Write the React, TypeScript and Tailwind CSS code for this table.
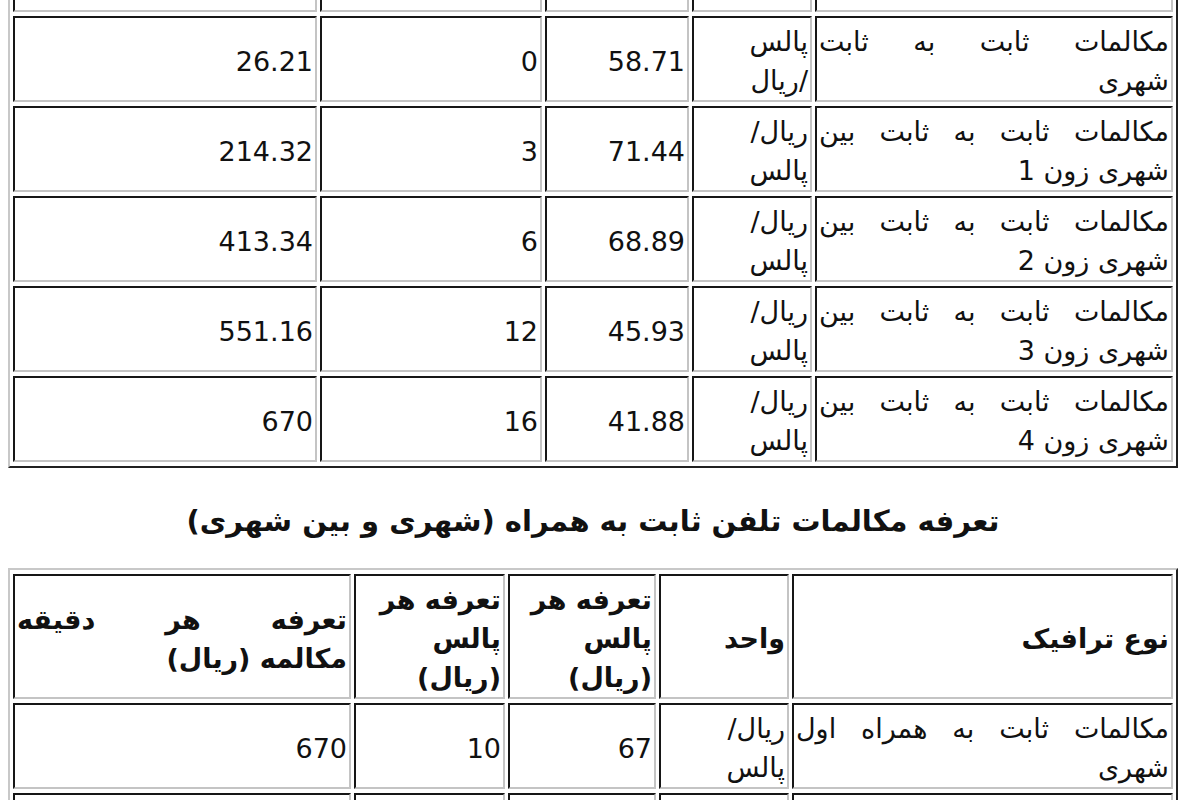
import React from "react";

const cell =
  "border-2 border-t-[#161616] border-l-[#161616] border-r-[#c4c4c4] border-b-[#c4c4c4] px-[2px] pt-[4px] pb-0 align-middle";
const tableCls =
  "w-full table-fixed border-separate [border-spacing:3px_4px] border-2 border-t-[#c8c8c8] border-l-[#c8c8c8] border-r-[#202020] border-b-[#202020]";

function TwoLine({ first, second, justify }: { first: string; second: string; justify?: boolean }) {
  return (
    <>
      <span className={justify ? "block [text-align-last:justify]" : "block"}>{first}</span>
      <span className="block">{second}</span>
    </>
  );
}

type FixedRow = { zone: string; unitFirst: string; unitSecond: string; pulse: string; count: string; total: string };

const fixedRows: FixedRow[] = [
  { zone: "", unitFirst: "پالس", unitSecond: "/ریال", pulse: "58.71", count: "0", total: "26.21" },
  { zone: "1", unitFirst: "ریال/", unitSecond: "پالس", pulse: "71.44", count: "3", total: "214.32" },
  { zone: "2", unitFirst: "ریال/", unitSecond: "پالس", pulse: "68.89", count: "6", total: "413.34" },
  { zone: "3", unitFirst: "ریال/", unitSecond: "پالس", pulse: "45.93", count: "12", total: "551.16" },
  { zone: "4", unitFirst: "ریال/", unitSecond: "پالس", pulse: "41.88", count: "16", total: "670" },
];

function FixedTable() {
  return (
    <table className={`${tableCls} mt-[-80px]`}>
      <tbody>
        <tr className="h-[86px]">
          <td className={`${cell} w-[358px]`}></td>
          <td className={`${cell} w-[120px]`}></td>
          <td className={`${cell} w-[144px]`}></td>
          <td className={`${cell} w-[222px]`}></td>
          <td className={cell}></td>
        </tr>
        {fixedRows.map((row) => (
          <tr key={row.total}>
            <td className={cell}>
              {row.zone ? (
                <TwoLine first="مکالمات ثابت به ثابت بین" second={`شهری زون ${row.zone}`} justify />
              ) : (
                <TwoLine first="مکالمات ثابت به ثابت" second="شهری" justify />
              )}
            </td>
            <td className={cell}>
              <TwoLine first={row.unitFirst} second={row.unitSecond} />
            </td>
            <td className={cell}>{row.pulse}</td>
            <td className={cell}>{row.count}</td>
            <td className={cell}>{row.total}</td>
          </tr>
        ))}
      </tbody>
    </table>
  );
}

function MobileTable() {
  return (
    <table className={tableCls}>
      <tbody>
        <tr className="font-bold">
          <td className={`${cell} w-[381px]`}>نوع ترافیک</td>
          <td className={`${cell} w-[130px]`}>واحد</td>
          <td className={`${cell} w-[148px]`}>
            <span className="block">تعرفه هر</span>
            <span className="block">پالس</span>
            <span className="block">(ریال)</span>
          </td>
          <td className={`${cell} w-[151px]`}>
            <span className="block">تعرفه هر</span>
            <span className="block">پالس</span>
            <span className="block">(ریال)</span>
          </td>
          <td className={cell}>
            <TwoLine first="تعرفه هر دقیقه" second="مکالمه (ریال)" justify />
          </td>
        </tr>
        <tr>
          <td className={cell}>
            <TwoLine first="مکالمات ثابت به همراه اول" second="شهری" justify />
          </td>
          <td className={cell}>
            <TwoLine first="ریال/" second="پالس" />
          </td>
          <td className={cell}>67</td>
          <td className={cell}>10</td>
          <td className={cell}>670</td>
        </tr>
        <tr className="h-[86px]">
          <td className={cell}></td>
          <td className={cell}></td>
          <td className={cell}></td>
          <td className={cell}></td>
          <td className={cell}></td>
        </tr>
      </tbody>
    </table>
  );
}

export default function App() {
  return (
    <div className="h-[800px] overflow-hidden bg-white">
      <div
        dir="rtl"
        className="ml-[8px] w-[1170px] text-[27px] leading-[39px] text-[#111] [font-family:'DejaVu_Sans',sans-serif]"
      >
        <FixedTable />
        <p className="mt-[34px] mb-[27px] text-center text-[29px] font-bold">
          تعرفه مکالمات تلفن ثابت به همراه (شهری و بین شهری)
        </p>
        <MobileTable />
      </div>
    </div>
  );
}
